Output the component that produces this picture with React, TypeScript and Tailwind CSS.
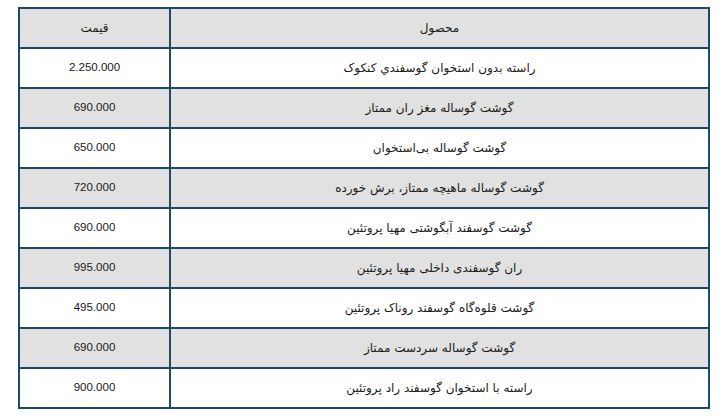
import React from "react";

const rows: [string, string][] = [
  ["راسته بدون استخوان گوسفندي کنکوک", "2.250.000"],
  ["گوشت گوساله مغز ران ممتاز", "690.000"],
  ["گوشت گوساله بی‌استخوان", "650.000"],
  ["گوشت گوساله ماهیچه ممتاز، برش خورده", "720.000"],
  ["گوشت گوسفند آبگوشتی مهیا پروتئین", "690.000"],
  ["ران گوسفندی داخلی مهیا پروتئین", "995.000"],
  ["گوشت قلوه‌گاه گوسفند روناک پروتئین", "495.000"],
  ["گوشت گوساله سردست ممتاز", "690.000"],
  ["راسته با استخوان گوسفند راد پروتئین", "900.000"],
];

export default function App() {
  return (
    <div className="w-[723px] h-[420px] bg-white pt-[7px] pl-[18px]">
      <div className="grid w-[692px] grid-cols-[149px_537px] gap-[2px] border-2 border-[#1d4a68] bg-[#1d4a68] auto-rows-[38px]">
        <div dir="rtl" className="flex items-center justify-center bg-[#e1e1e1] font-['DejaVu_Sans',sans-serif] text-[12px] text-[#1a1a1a]">
          قیمت
        </div>
        <div dir="rtl" className="flex items-center justify-center bg-[#e1e1e1] font-['DejaVu_Sans',sans-serif] text-[12px] text-[#1a1a1a]">
          محصول
        </div>
        {rows.map(([name, price], i) => (
          <React.Fragment key={i}>
            <div
              className={
                i % 2 === 0
                  ? "flex items-center justify-center bg-white font-['Liberation_Sans',Arial,sans-serif] text-[11.5px] text-[#1a1a1a]"
                  : "flex items-center justify-center bg-[#e1e1e1] font-['Liberation_Sans',Arial,sans-serif] text-[11.5px] text-[#1a1a1a]"
              }
            >
              {price}
            </div>
            <div
              dir="rtl"
              className={
                i % 2 === 0
                  ? "flex items-center justify-center bg-white font-['DejaVu_Sans',sans-serif] text-[12px] text-[#1a1a1a]"
                  : "flex items-center justify-center bg-[#e1e1e1] font-['DejaVu_Sans',sans-serif] text-[12px] text-[#1a1a1a]"
              }
            >
              {name}
            </div>
          </React.Fragment>
        ))}
      </div>
    </div>
  );
}
